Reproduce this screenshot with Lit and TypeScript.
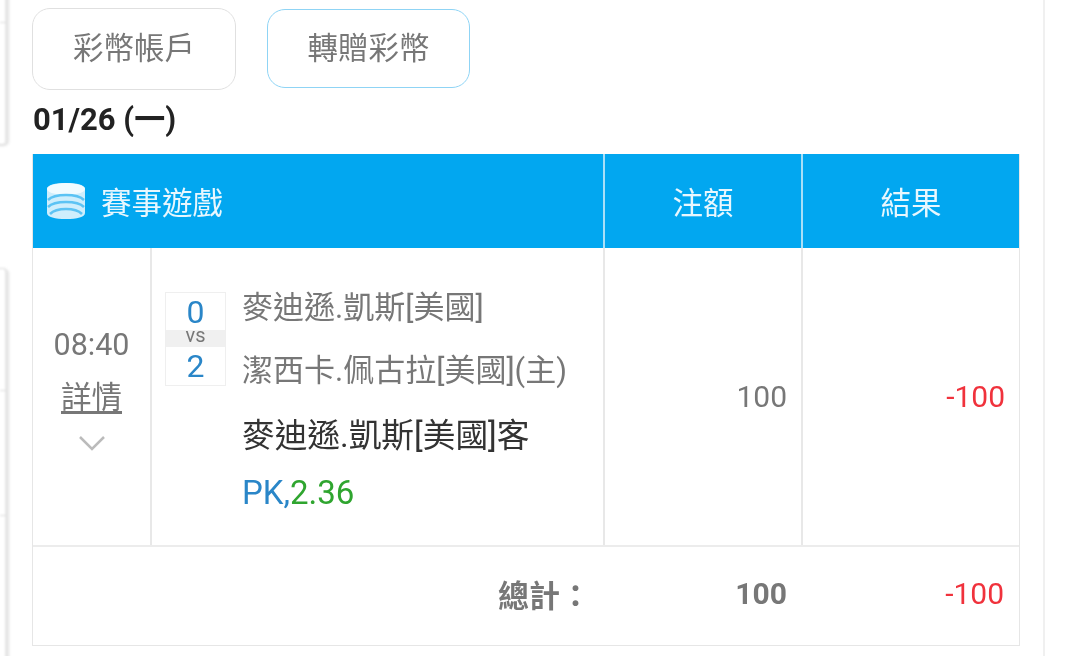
import { LitElement, html, css } from 'lit';
import { customElement } from 'lit/decorators.js';

@customElement('app-root')
export class AppRoot extends LitElement {
  static override styles = css`
    :host {
      display: block;
      position: relative;
      width: 1080px;
      height: 656px;
      overflow: hidden;
      background: #fff;
      font-family: Roboto, "Noto Sans CJK TC", sans-serif;
      color: #777;
    }

    /* sliver of the side menu that is cut off at the left */
    .side {
      position: absolute;
      left: 0;
      top: 0;
      bottom: 0;
      width: 12px;
      filter: blur(0.8px);
    }
    .side .card {
      position: absolute;
      left: -12px;
      width: 17px;
      background: #fff;
      border-right: 3px solid #e6e6e6;
      border-bottom: 1px solid #d8d8d8;
      border-top: 1px solid #dcdcdc;
      border-radius: 5px;
      box-shadow: 1px 1px 2px rgba(0, 0, 0, 0.12);
    }
    .side .one { top: -10px; height: 153px; }
    .side .two { top: 268px; height: 400px; }
    .side hr {
      position: absolute;
      left: 0;
      width: 6px;
      margin: 0;
      border: 0;
      height: 1px;
      background: #dcdcdc;
    }

    .panel {
      width: 1045px;
      height: 656px;
      box-sizing: border-box;
      border-right: 2px solid #f0f0f0;
      padding: 8px 0 0 32px;
      filter: blur(0.5px);
    }

    .tabs { display: flex; gap: 31px; }
    .tab {
      width: 204px;
      height: 82px;
      box-sizing: border-box;
      display: flex;
      align-items: center;
      justify-content: center;
      padding-bottom: 7px;
      border: 1px solid #e0e0e0;
      border-radius: 18px;
      font-size: 30.5px;
      color: #777;
    }
    .tab.on {
      width: 203px;
      height: 79px;
      margin-top: 1px;
      padding-bottom: 5px;
      border-color: #8fd4f5;
    }

    .date {
      margin: 10px 0 0 1px;
      height: 39px;
      line-height: 39px;
      font-size: 31px;
      font-weight: 700;
      color: #222;
    }

    .table {
      width: 986px;
      margin-top: 15px;
      display: grid;
      grid-template-columns: 119px 451px 198px 218px;
      grid-template-rows: 94px 297px 100px;
      border: 1px solid #e6e6e6;
      border-top: 0;
    }

    .head {
      background: #02a7f0;
      color: #e8f7fe;
      font-size: 30.5px;
      display: flex;
      align-items: center;
      justify-content: center;
      border-left: 2px solid #a9dff7;
    }
    .head.game {
      grid-column: 1 / 3;
      justify-content: flex-start;
      gap: 15px;
      padding-left: 13px;
      border-left: 0;
    }

    .time {
      display: flex;
      flex-direction: column;
      align-items: center;
      padding-top: 79px;
      border-right: 2px solid #e8e8e8;
      font-size: 30.5px;
      line-height: 36px;
    }
    .time a {
      margin-top: 17px;
      text-decoration: underline;
      text-underline-offset: 3px;
    }
    .time svg { margin-top: 18px; }

    .match { display: flex; padding: 44px 0 0 13px; }

    .score {
      width: 61px;
      height: 94px;
      box-sizing: border-box;
      border: 1px solid #efefef;
      display: flex;
      flex-direction: column;
      text-align: center;
      font-size: 32px;
      color: #2a86c8;
      flex: none;
    }
    .score span { height: 37px; line-height: 38px; }
    .score i {
      height: 17px;
      line-height: 11px;
      background: #f0f0f0;
      font-style: normal;
      font-size: 20px;
      color: #777;
    }

    .info { margin-left: 16px; margin-top: -16px; }
    .info div { font-size: 31px; line-height: 63px; white-space: nowrap; }
    .info .pick { color: #333; font-size: 32.7px; line-height: 69px; }
    .info .odds { color: #2a86c8; font-size: 33px; line-height: 44px; }
    .info .odds b { color: #2fa52f; font-weight: 400; }

    .num {
      display: flex;
      align-items: center;
      justify-content: flex-end;
      padding-right: 14px;
      font-size: 30px;
      border-left: 2px solid #e8e8e8;
    }
    .red { color: #f0323c; }

    .foot {
      grid-column: 1 / 5;
      display: grid;
      grid-template-columns: 570px 198px 218px;
      align-items: center;
      padding-bottom: 5px;
      border-top: 2px solid #ececec;
      font-size: 30px;
    }
    .foot .sum { text-align: right; font-weight: 700; font-size: 31px; padding-right: 12px; }
    .foot .total { text-align: right; padding-right: 14px; font-weight: 700; }
    .foot .red { text-align: right; padding-right: 15px; }
  `;

  private coinIcon() {
    return html`<svg width="40" height="40" viewBox="0 0 40 40" fill="none">
      <path d="M1 8c0-4 8-6 19-6s19 2 19 6v24c0 4-8 6-19 6S1 36 1 32z" fill="#cfeefc"/>
      <ellipse cx="20" cy="8" rx="19" ry="6" fill="#f2fbff"/>
      <path d="M2 19c4-4 11-5 18-5s14 1 18 5M2 26c4-4 11-5 18-5s14 1 18 5M4 33c4-4 9-5 16-5s12 1 16 5"
        stroke="#5cc3f4" stroke-width="2.5"/>
    </svg>`;
  }

  override render() {
    return html`
      <div class="side">
        <div class="card one"></div>
        <div class="card two"></div>
        <hr style="top:22px" />
        <hr style="top:390px" />
        <hr style="top:515px" />
      </div>
      <div class="panel">
        <div class="tabs">
          <div class="tab">彩幣帳戶</div>
          <div class="tab on">轉贈彩幣</div>
        </div>
        <div class="date">01/26 (一)</div>
        <div class="table">
          <div class="head game">${this.coinIcon()}<span>賽事遊戲</span></div>
          <div class="head">注額</div>
          <div class="head">結果</div>

          <div class="time">
            <span>08:40</span>
            <a>詳情</a>
            <svg width="28" height="18" viewBox="0 0 28 18" fill="none">
              <path d="M2 3l12 12L26 3" stroke="#bbb" stroke-width="2.5"/>
            </svg>
          </div>
          <div class="match">
            <div class="score">
              <span>0</span>
              <i>vs</i>
              <span>2</span>
            </div>
            <div class="info">
              <div>麥迪遜.凱斯[美國]</div>
              <div>潔西卡.佩古拉[美國](主)</div>
              <div class="pick">麥迪遜.凱斯[美國]客</div>
              <div class="odds">PK,<b>2.36</b></div>
            </div>
          </div>
          <div class="num">100</div>
          <div class="num red">-100</div>

          <div class="foot">
            <div class="sum">總計：</div>
            <div class="total">100</div>
            <div class="red">-100</div>
          </div>
        </div>
      </div>
    `;
  }
}
